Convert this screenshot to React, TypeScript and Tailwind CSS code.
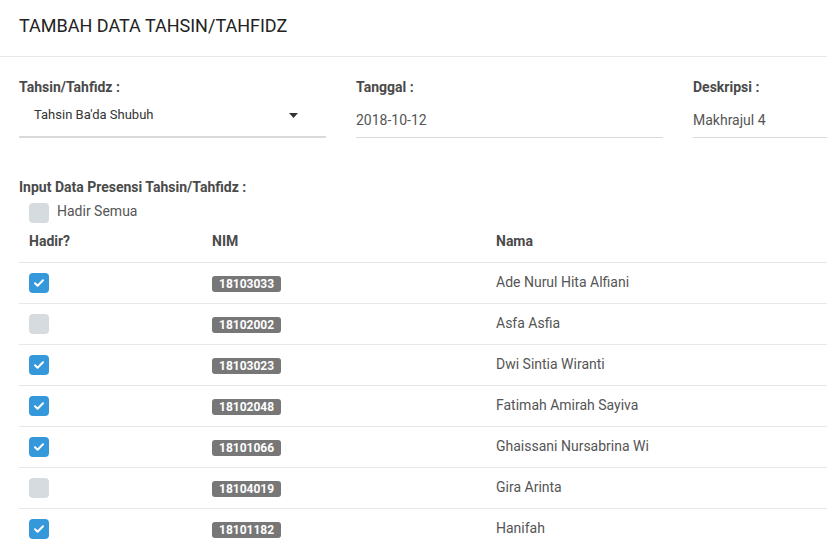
const students = [
  { nim: '18103033', nama: 'Ade Nurul Hita Alfiani', hadir: true },
  { nim: '18102002', nama: 'Asfa Asfia', hadir: false },
  { nim: '18103023', nama: 'Dwi Sintia Wiranti', hadir: true },
  { nim: '18102048', nama: 'Fatimah Amirah Sayiva', hadir: true },
  { nim: '18101066', nama: 'Ghaissani Nursabrina Wi', hadir: true },
  { nim: '18104019', nama: 'Gira Arinta', hadir: false },
  { nim: '18101182', nama: 'Hanifah', hadir: true },
]

function Check({ checked }: { checked: boolean }) {
  return checked ? (
    <span className="w-5 h-5 rounded-[4px] bg-[#3498db] flex items-center justify-center">
      <svg width="12" height="10" viewBox="0 0 12 10" fill="none">
        <path d="M2 5.2l2.6 2.5L10 2.3" stroke="white" strokeWidth="2" strokeLinecap="round" strokeLinejoin="round" />
      </svg>
    </span>
  ) : (
    <span className="w-5 h-5 rounded-[4px] bg-[#d6dbdf] block" />
  )
}

export default function App() {
  return (
    <div className="w-[827px] h-[546px] overflow-hidden bg-white" style={{ fontFamily: 'Roboto, "Liberation Sans", sans-serif' }}>
      <div className="w-[1020px]">
        {/* Header */}
        <div className="h-[57px] border-b border-[#e8e8e8] px-[19px] flex items-center">
          <h1 className="text-[18px] text-[#222] leading-none pb-[4px]">TAMBAH DATA TAHSIN/TAHFIDZ</h1>
        </div>

        <div className="px-[19px]">
          {/* Form */}
          <div className="grid grid-cols-[307px_307px_307px] gap-[30px] pt-[20px]">
            <div>
              <label className="block text-[14px] font-bold text-[#4a4a4a] leading-5">Tahsin/Tahfidz :</label>
              <div className="mt-[9px] h-[32px] border-b-2 border-[#dadada] flex items-center justify-between pl-[15px] pr-[28px]">
                <span className="text-[13px] text-[#333] pb-[12px]">Tahsin Ba'da Shubuh</span>
                <svg width="9" height="5" viewBox="0 0 9 5" className="mb-[12px]">
                  <path d="M0 0h9L4.5 5z" fill="#333" />
                </svg>
              </div>
            </div>
            <div>
              <label className="block text-[14px] font-bold text-[#4a4a4a] leading-5">Tanggal :</label>
              <div className="mt-[9px] h-[32px] border-b border-[#dadada] flex items-center pb-[3px]">
                <span className="text-[14px] text-[#555]">2018-10-12</span>
              </div>
            </div>
            <div>
              <label className="block text-[14px] font-bold text-[#4a4a4a] leading-5">Deskripsi :</label>
              <div className="mt-[9px] h-[32px] border-b border-[#dadada] flex items-center pb-[3px]">
                <span className="text-[14px] text-[#555]">Makhrajul 4</span>
              </div>
            </div>
          </div>

          {/* Presensi */}
          <div className="pt-[39px]">
            <div className="text-[14px] font-bold text-[#4a4a4a] leading-5">Input Data Presensi Tahsin/Tahfidz :</div>
            <div className="flex items-center gap-[8px] pl-[10px] mt-[4px]">
              <Check checked={false} />
              <span className="text-[14px] text-[#555] pb-[2px]">Hadir Semua</span>
            </div>

            <table className="w-full border-collapse">
              <thead>
                <tr className="h-[38px] border-b border-[#e8e8e8]">
                  <th className="w-[183px] text-left pl-[10px] pb-[2px] text-[14px] font-bold text-[#4a4a4a]">Hadir?</th>
                  <th className="w-[284px] text-left pl-[10px] pb-[2px] text-[14px] font-bold text-[#4a4a4a]">NIM</th>
                  <th className="text-left pl-[10px] pb-[2px] text-[14px] font-bold text-[#4a4a4a]">Nama</th>
                </tr>
              </thead>
              <tbody>
                {students.map(s => (
                  <tr key={s.nim} className="h-[41px] border-b border-[#e8e8e8]">
                    <td className="pl-[10px] align-middle">
                      <Check checked={s.hadir} />
                    </td>
                    <td className="pl-[10px] align-middle">
                      <span className="inline-block bg-[#777] text-white text-[12px] font-bold leading-4 px-[7px] rounded-[3px]">{s.nim}</span>
                    </td>
                    <td className="pl-[10px] align-middle text-[14px] text-[#555]">{s.nama}</td>
                  </tr>
                ))}
              </tbody>
            </table>
          </div>
        </div>
      </div>
    </div>
  )
}
